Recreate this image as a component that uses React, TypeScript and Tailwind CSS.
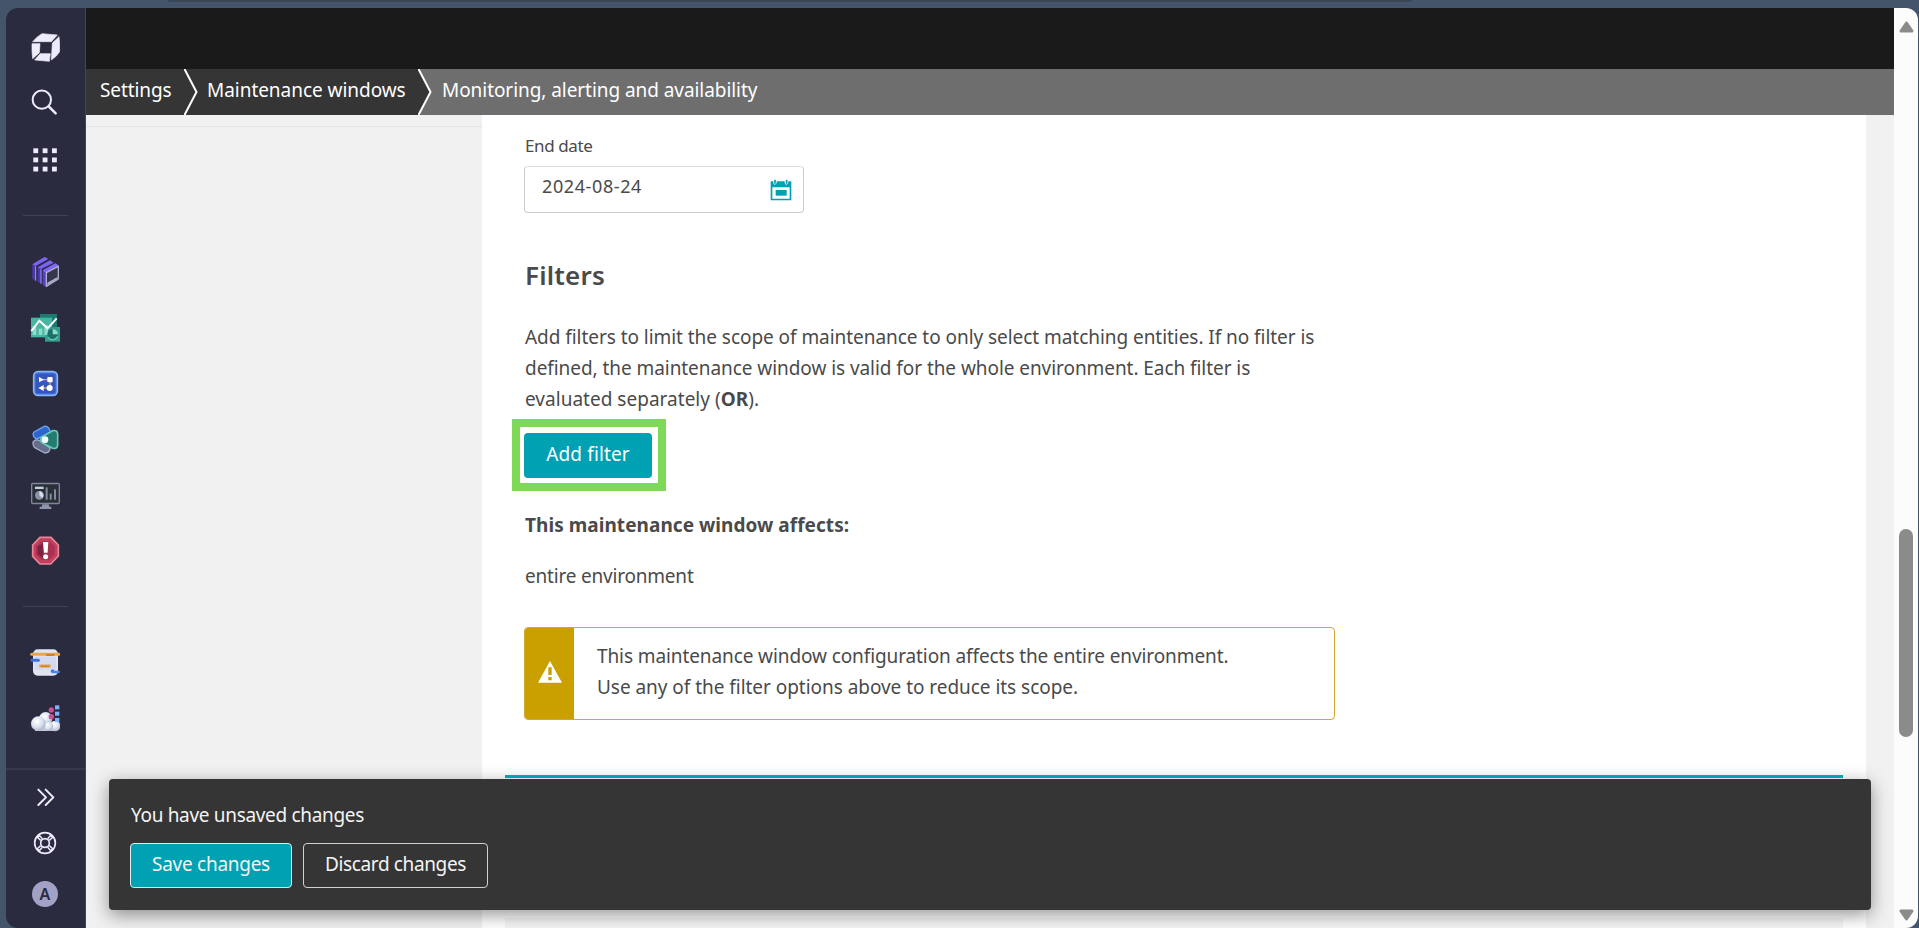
import type { ReactNode } from "react";

type IconProps = { box: string; className?: string; children: ReactNode };

function Icon({ box, className = "", children }: IconProps) {
  return (
    <svg viewBox={box} className={`ml-6 h-[30px] w-[30px] shrink-0 ${className}`}>
      {children}
    </svg>
  );
}

function LogoIcon() {
  return (
    <Icon box="90 99 90 90" className="mt-[25px]">
      <g fill="#ececfd" stroke="#ececfd" strokeWidth="2" strokeLinejoin="round">
        <path d="M126 101 172 105 154 125 98 125Q110 110 126 101Z" />
        <path d="M96 131 120 131 118 158 98 176Q95 154 96 131Z" />
        <path d="M120 161 151 161 148 184 104 180Z" />
        <path d="M177 110 157 129 154 180Q170 170 179 155Q180 130 177 110Z" />
      </g>
    </Icon>
  );
}

function SearchIcon() {
  return (
    <Icon box="90 261 90 90" className="mt-[24px]">
      <g fill="none" stroke="#ececfd" strokeLinecap="round">
        <circle cx="125.500" cy="299" r="27.500" strokeWidth="6" />
        <path d="M146 319 167 340" strokeWidth="7.500" />
      </g>
    </Icon>
  );
}

function AppsIcon() {
  return (
    <Icon box="90 435 90 90" className="mt-[28px]">
      {[100, 128, 156].map((x) =>
        [445, 472.5, 500].map((y) => (
          <rect key={`${x}-${y}`} x={x} y={y} width="14.500" height="14.500" fill="#ececfd" />
        )),
      )}
    </Icon>
  );
}

function StackIcon() {
  return (
    <Icon box="90 78 90 90" className="mt-[40px] overflow-visible">
      <path d="M97 105 134 81 143 86 107 108 107 152 97 147Z" fill="#4a37b5" />
      <path d="M97 103 134 81 145 87 107 108Z" fill="#7c62f2" />
      <path d="M107 109 107 152" stroke="#a79ae8" strokeWidth="3" />
      <path d="M113 113 150 91 160 98 123 117 123 160 113 156Z" fill="#4a37b5" />
      <path d="M113 112 150 91 161 98 123 117Z" fill="#7c62f2" />
      <path d="M123 118 123 161" stroke="#a79ae8" strokeWidth="3" />
      <path d="M128 122 166 100 177 107 138 127 138 171 128 165Z" fill="#5340c4" />
      <path d="M128 121 166 100 177 107 137 128Z" fill="#8268f6" />
      <path d="M139 128 175 109 175 147 139 169Z" fill="#35364a" stroke="#b1aed0" strokeWidth="4" strokeLinejoin="round" />
      <path d="M142 158 172 141 172 148 142 165Z" fill="#a8b0ca" />
    </Icon>
  );
}

function ChartsIcon() {
  return (
    <Icon box="90 249 90 90" className="mt-[27px]">
      <rect x="120" y="252" width="51" height="45" fill="#1d7a70" />
      <rect x="93" y="263" width="63" height="59" fill="#48b5a0" />
      <rect x="135" y="291" width="45" height="44" fill="#359c8b" />
      <g fill="#8ddcca">
        <rect x="98" y="288" width="11" height="27" />
        <rect x="116" y="296" width="11" height="19" />
        <rect x="133" y="286" width="11" height="29" />
      </g>
      <circle cx="158" cy="313" r="16" fill="#1f6f69" />
      <path d="M158 313V297A16 16 0 0 1 174 313Z" fill="#8ddcca" />
      <path d="M144 321A16 16 0 0 0 173 319" fill="none" stroke="#60c5b1" strokeWidth="4" />
      <path d="M94 303 118 272 143 295 170 265" fill="none" stroke="#fff" strokeWidth="6" />
    </Icon>
  );
}

function WorkflowIcon() {
  return (
    <Icon box="90 417 90 90" className="mt-[26px]">
      <rect x="101" y="425" width="71" height="71" rx="13" fill="#3f69d8" stroke="#86b8f7" strokeWidth="5" />
      <rect x="108" y="432" width="57" height="57" rx="7" fill="#3456bd" />
      <path d="M128 449H150V474H126" fill="none" stroke="#e2a45c" strokeWidth="4" />
      <path d="M117 441 132 449 117 457Z" fill="#fff" />
      <rect x="142" y="441" width="16" height="16" rx="3" fill="#fff" />
      <path d="M131 465 115 474 131 483Z" fill="#fff" />
      <circle cx="149" cy="474" r="9" fill="#fff" />
    </Icon>
  );
}

function PrismIcon() {
  return (
    <Icon box="90 12 90 90" className="mt-[25px]">
      <g strokeLinejoin="round">
        <path d="M102 36 133 19Q139 16 146 24L152 36 128 50 108 57Q99 50 99 42Z" fill="#2d65cf" stroke="#6fa5f5" strokeWidth="4" />
        <path d="M99 66Q105 57 118 61L150 84Q150 99 134 99L103 82Q98 76 99 66Z" fill="#666d8c" stroke="#a7aec9" strokeWidth="4" />
        <path d="M126 50 158 32Q172 29 173 42V76Q171 88 158 85L126 68Q118 59 126 50Z" fill="#257b70" stroke="#66cbb8" strokeWidth="5" />
      </g>
      <circle cx="135" cy="59" r="10" fill="#f0fffc" />
    </Icon>
  );
}

function MonitorIcon() {
  return (
    <Icon box="90 183 90 90" className="mt-[27px]">
      <rect x="95" y="190.500" width="83" height="60" rx="3" fill="#2a3038" stroke="#80869a" strokeWidth="4" />
      <path d="M127 253H146L148 260H154V267H119V260H125Z" fill="#8e95ad" />
      <rect x="105" y="200" width="26" height="7" fill="#c9cde0" />
      <circle cx="118" cy="226" r="13" fill="#8b91a8" />
      <path d="M118 226V213A13 13 0 0 1 127 235Z" fill="#d7dbea" />
      <g fill="#858b9e">
        <rect x="137" y="202" width="6" height="37" />
        <rect x="149" y="221" width="6" height="18" />
        <rect x="162" y="208" width="6" height="31" />
      </g>
    </Icon>
  );
}

function ProblemIcon() {
  return (
    <Icon box="90 348 90 90" className="mt-[25px]">
      <path d="M120 352H153L175 375V408L152 432H120L98 409V375Z" fill="#c23f60" stroke="#ea8797" strokeWidth="5" />
      <path d="M125 363H148L164 380V403L147 420H125L108 403V380Z" fill="#a83250" />
      <path d="M128 370 113 380V403L129 414Z" fill="#7b2340" />
      <path d="M129 366H145L143 398H132Z" fill="#fff" />
      <circle cx="137" cy="410" r="7.500" fill="#fff" />
    </Icon>
  );
}

function ScrollIcon() {
  return (
    <Icon box="90 114 90 90" className="mt-[41px]">
      <rect x="99" y="118" width="75" height="79" rx="14" fill="#e0e4f3" />
      <path d="M104 140H169V180H104Z" fill="#d3d9ee" />
      <path d="M95 133H177" stroke="#eba64c" strokeWidth="9" strokeLinecap="round" />
      <path d="M138 135H163" stroke="#c27a22" strokeWidth="5" />
      <path d="M96 151H115" stroke="#3a6fe0" strokeWidth="9" strokeLinecap="round" />
      <path d="M118 168H152" stroke="#e5a04a" strokeWidth="9" />
      <path d="M124 169H146" stroke="#b96e1c" strokeWidth="4" strokeDasharray="6 3" />
      <circle cx="158" cy="184" r="5.500" fill="#2d62dc" />
      <path d="M158 186H176" stroke="#4a86f0" strokeWidth="7" strokeLinecap="round" />
    </Icon>
  );
}

function CloudIcon() {
  return (
    <Icon box="90 279 90 90" className="mt-[25px]">
      <defs>
        <radialGradient id="cloud" cx="40%" cy="35%" r="75%">
          <stop offset="0" stopColor="#ffffff" />
          <stop offset="0.500" stopColor="#dde2ef" />
          <stop offset="1" stopColor="#9ba6c2" />
        </radialGradient>
      </defs>
      <circle cx="137" cy="326" r="20" fill="url(#cloud)" />
      <rect x="105" y="335" width="60" height="28" fill="#c3cbe0" />
      <circle cx="166" cy="348" r="15.500" fill="url(#cloud)" />
      <circle cx="145" cy="349" r="14" fill="url(#cloud)" />
      <circle cx="115" cy="341" r="22" fill="url(#cloud)" />
      <circle cx="154" cy="300" r="8" fill="#cf4ba0" />
      <circle cx="154" cy="320" r="8" fill="#cf4ba0" />
      <g fill="#7fb0fa">
        <rect x="165" y="286" width="13" height="12" />
        <rect x="165" y="305" width="13" height="12" />
        <rect x="165" y="324" width="13" height="12" />
      </g>
    </Icon>
  );
}

function ExpandIcon() {
  return (
    <Icon box="90 519 90 90" className="mt-[13px]">
      <path d="M115 539 138 562 115 585M137 539 160 562 137 585" fill="none" stroke="#ececfd" strokeWidth="6" strokeLinecap="round" strokeLinejoin="round" />
    </Icon>
  );
}

function SupportIcon() {
  return (
    <Icon box="90 654 90 90" className="mt-[15px]">
      <g fill="none" stroke="#ececfd" strokeWidth="5">
        <circle cx="135" cy="699" r="31" />
        <circle cx="135" cy="699" r="13" />
        <path d="M112 684 120 676M122 691 112 682 118 676 127 686M148 691 158 682 152 676 143 686M122 707 112 716 118 722 127 712M148 707 158 716 152 722 143 712" strokeWidth="4.500" />
      </g>
    </Icon>
  );
}

function CalendarIcon() {
  return (
    <svg viewBox="0 0 66 66" className="h-[22px] w-[22px]">
      <path d="M2 7H10V12Q13 23 20 12V7H44V12Q48 23 55 12V7H64V64H2ZM7 25V59H59V25Z" fill="#00a1b2" fillRule="evenodd" />
      <path d="M15 2V14M50 2V14" stroke="#00a1b2" strokeWidth="5" />
      <rect x="17" y="33" width="33" height="17" fill="#00a1b2" />
    </svg>
  );
}

function Sidebar() {
  return (
    <nav className="flex w-20 shrink-0 flex-col rounded-l-[12px] border-r border-[#45455a] bg-[#2b2b3f]">
      <LogoIcon />
      <SearchIcon />
      <AppsIcon />
      <hr className="mt-10 ml-[17px] h-px w-[45px] border-0 bg-[#404056]" />
      <StackIcon />
      <ChartsIcon />
      <WorkflowIcon />
      <PrismIcon />
      <MonitorIcon />
      <ProblemIcon />
      <hr className="mt-10 ml-[17px] h-px w-[45px] border-0 bg-[#404056]" />
      <ScrollIcon />
      <CloudIcon />
      <hr className="mt-[35px] h-0.5 border-0 bg-[#38384d]" />
      <ExpandIcon />
      <SupportIcon />
      <div className="mt-[23px] ml-[26px] flex h-[26px] w-[26px] items-center justify-center rounded-full bg-[#a2a1c6] text-[16px] font-semibold text-[#2b2b3f]">
        A
      </div>
    </nav>
  );
}

function Chevron({ after }: { after: string }) {
  return (
    <svg viewBox="0 0 14 46" className="h-[46px] w-[14px] shrink-0 bg-[#353535]">
      <path d="M0 0 12.500 23 0 46H14V0Z" fill={after} />
      <path d="M0.500 0 12.500 23 0.500 46" fill="none" stroke="#fff" strokeWidth="2" />
    </svg>
  );
}

function Breadcrumb() {
  return (
    <div className="flex h-[46px] shrink-0 bg-[#6e6e6e] text-[19px] leading-[42px] whitespace-nowrap text-white">
      <div className="flex bg-[#353535]">
        <span className="w-[98px] pl-[14px] tracking-[-0.1px]">Settings</span>
        <Chevron after="#353535" />
        <span className="w-[220px] pl-[9px] tracking-[-0.04px]">Maintenance windows</span>
      </div>
      <Chevron after="#6e6e6e" />
      <span className="pl-[10px] tracking-[-0.06px]">Monitoring, alerting and availability</span>
    </div>
  );
}

function Form() {
  return (
    <main className="flex w-[1384px] shrink-0 flex-col bg-white pl-[42px] text-[19px] leading-[31px] text-[#4a4a4a]">
      <label className="mt-[19px] pl-px text-[17px] leading-6 tracking-[-0.4px]">End date</label>
      <div className="mt-2 flex h-[47px] w-[280px] shrink-0 items-center justify-between rounded border border-[#cccccc] border-t-[#dddddd] pr-[11px] pl-[17px]">
        <span className="pb-1.5 text-[18px] tracking-[0.6px]">2024-08-24</span>
        <CalendarIcon />
      </div>
      <h2 className="mt-11 pl-px text-[26px] leading-9 font-semibold tracking-[0.2px]">Filters</h2>
      <p className="mt-[29px] w-[812px] pl-px">
        <span className="block tracking-[-0.05px] whitespace-nowrap">
          Add filters to limit the scope of maintenance to only select matching entities. If no filter is
        </span>
        <span className="block tracking-[-0.06px] whitespace-nowrap">
          defined, the maintenance window is valid for the whole environment. Each filter is
        </span>
        <span className="block tracking-[0.02px]">
          evaluated separately (<b>OR</b>).
        </span>
      </p>
      <div className="relative mt-[18px] w-32">
        <button className="block h-[45px] w-32 rounded bg-[#00a1b2] pb-[3px] tracking-[0.15px] text-white">
          Add filter
        </button>
        <div className="pointer-events-none absolute -inset-x-3 -top-3.5 h-[72px] w-[154px] border-8 border-[#7ed957]" />
      </div>
      <h3 className="mt-8 pl-px font-bold tracking-[0.05px]">This maintenance window affects:</h3>
      <p className="mt-5 pl-px tracking-[-0.2px]">entire environment</p>
      <div className="mt-[35px] flex h-[93px] w-[811px] shrink-0 overflow-hidden rounded border border-[#d0a92f]">
        <div className="flex w-[49px] items-center justify-center bg-[#c9a000]">
          <svg viewBox="0 0 72 66" className="mt-[-3px] h-[22px] w-6">
            <path d="M36 0 72 65H0ZM31 19V42H41V19ZM31 48V58H41V48Z" fill="#fff" fillRule="evenodd" />
          </svg>
        </div>
        <div className="pt-[13px] pl-[23px] whitespace-nowrap">
          <p className="tracking-[-0.1px]">This maintenance window configuration affects the entire environment.</p>
          <p className="tracking-[-0.04px]">Use any of the filter options above to reduce its scope.</p>
        </div>
      </div>
      <div className="mt-[55px] ml-[-19px] h-[143px] w-[1338px] shrink-0 border-t-[3px] border-[#00b1c0]" />
      <div className="ml-[-19px] w-[1338px] grow bg-[#f6f6f6]" />
    </main>
  );
}

function UnsavedBar() {
  return (
    <section className="absolute top-[779px] left-[109px] flex h-[131px] w-[1762px] flex-col rounded bg-[#353535] pl-[21px] text-[19px] text-[#f4f4f4] shadow-[0_5px_18px_0_rgba(0,0,0,0.42)]">
      <p className="mt-[21px] pl-px leading-[31px] tracking-[-0.32px]">You have unsaved changes</p>
      <div className="mt-3 flex gap-[11px]">
        <button className="h-[45px] w-[162px] rounded border border-[#d8f0f2] bg-[#00a1b2] pb-[3px] tracking-[-0.27px]">
          Save changes
        </button>
        <button className="h-[45px] w-[185px] rounded border border-[#d0d0d0] pb-[3px] tracking-[-0.36px]">
          Discard changes
        </button>
      </div>
    </section>
  );
}

function Scrollbar() {
  return (
    <div className="flex w-6 shrink-0 flex-col items-center rounded-r-[12px] bg-[#fcfcfc]">
      <svg viewBox="0 0 15 12" className="mt-[13px] h-3 w-[15px]">
        <path d="M7.500 2 13 10H2Z" fill="#8b8b8b" stroke="#8b8b8b" strokeWidth="3" strokeLinejoin="round" />
      </svg>
      <div className="mt-[496px] h-[208px] w-3.5 rounded-full bg-[#8b8b8b]" />
      <svg viewBox="0 0 15 12" className="mt-[172px] h-3 w-[15px]">
        <path d="M7.500 10 2 2H13Z" fill="#8b8b8b" stroke="#8b8b8b" strokeWidth="3" strokeLinejoin="round" />
      </svg>
    </div>
  );
}

export default function App() {
  return (
    <div className="relative flex h-[928px] w-[1919px] flex-col overflow-hidden bg-[#44546a] font-['Noto_Sans',sans-serif]">
      <div className="ml-[168px] h-0.5 w-[1244px] shrink-0 rounded-b bg-[#3a4556]" />
      <div className="mt-1.5 flex min-h-0 grow pr-px pl-1.5">
        <Sidebar />
        <div className="flex w-[1808px] shrink-0 flex-col">
          <header className="h-[61px] shrink-0 bg-[#1a1a1a]" />
          <Breadcrumb />
          <div className="flex min-h-0 grow overflow-hidden bg-[#f1f1f1]">
            <aside className="w-[396px] shrink-0 pt-[11px]">
              <hr className="h-px border-0 bg-[#e4e4e4]" />
            </aside>
            <Form />
          </div>
        </div>
        <Scrollbar />
      </div>
      <UnsavedBar />
    </div>
  );
}
